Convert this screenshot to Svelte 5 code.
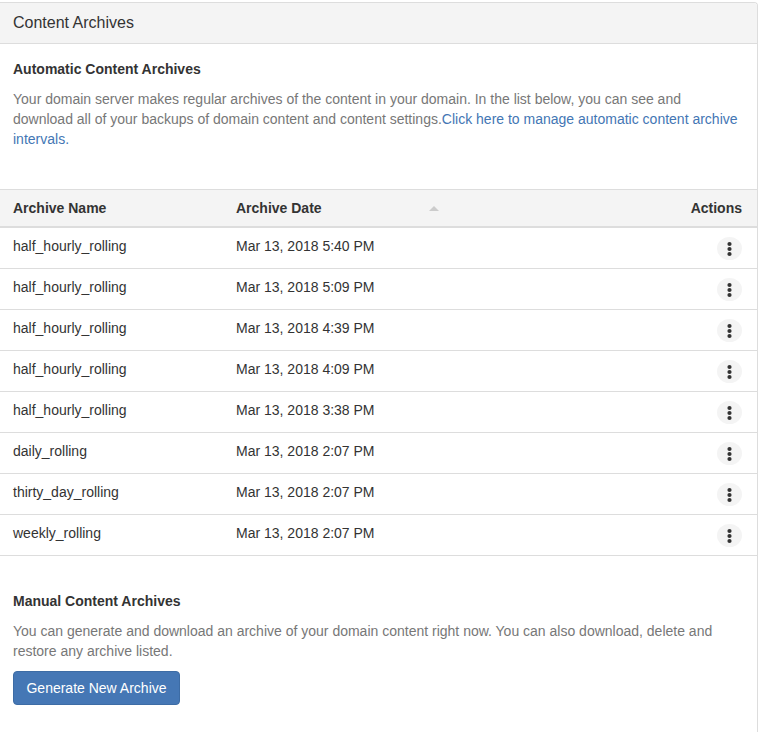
<script>
  const archives = [
    ['half_hourly_rolling', 'Mar 13, 2018 5:40 PM'],
    ['half_hourly_rolling', 'Mar 13, 2018 5:09 PM'],
    ['half_hourly_rolling', 'Mar 13, 2018 4:39 PM'],
    ['half_hourly_rolling', 'Mar 13, 2018 4:09 PM'],
    ['half_hourly_rolling', 'Mar 13, 2018 3:38 PM'],
    ['daily_rolling', 'Mar 13, 2018 2:07 PM'],
    ['thirty_day_rolling', 'Mar 13, 2018 2:07 PM'],
    ['weekly_rolling', 'Mar 13, 2018 2:07 PM']
  ];
</script>

<div class="panel">
  <header>Content Archives</header>
  <section class="intro">
    <h2>Automatic Content Archives</h2>
    <p>
      Your domain server makes regular archives of the content in your domain. In the list below, you can see and<br />
      download all of your backups of domain content and content settings.<a href="#intervals">Click here to manage automatic content archive<br />intervals.</a>
    </p>
  </section>
  <div class="table">
    <div class="row head">
      <span class="name">Archive Name</span>
      <span class="date">Archive Date
        <svg width="10" height="5" viewBox="0 0 10 5"><path d="M0 5 5 0l5 5z" fill="#ccc" /></svg>
      </span>
      <span class="actions">Actions</span>
    </div>
    {#each archives as [name, date]}
      <div class="row">
        <span class="name">{name}</span>
        <span class="date">{date}</span>
        <button class="menu" aria-label="Archive actions">
          <svg width="25" height="23" viewBox="0 0 25 23" fill="#333">
            <circle cx="12.5" cy="7" r="2.1" />
            <circle cx="12.5" cy="12" r="2.1" />
            <circle cx="12.5" cy="17" r="2.1" />
          </svg>
        </button>
      </div>
    {/each}
  </div>
  <section class="manual">
    <h2>Manual Content Archives</h2>
    <p>
      You can generate and download an archive of your domain content right now. You can also download, delete and<br />
      restore any archive listed.
    </p>
    <button class="generate">Generate New Archive</button>
  </section>
</div>

<style>
  :global(body) {
    background: #fff;
    overflow: hidden;
  }
  .panel {
    box-sizing: border-box;
    width: 758px;
    height: 730px;
    margin-top: 2px;
    border: 1px solid #ddd;
    border-width: 1px 1px 0 0;
    border-top-right-radius: 4px;
    overflow: hidden;
    font: 14px/20px "Liberation Sans", Arial, sans-serif;
    color: #333;
  }
  header {
    height: 40px;
    padding-left: 13px;
    border-bottom: 1px solid #ddd;
    background: #f4f4f4;
    font-size: 16px;
    line-height: 39px;
  }
  .intro {
    height: 130px;
    padding: 15px 13px 0;
  }
  h2 {
    margin: 0 0 10px;
    font-size: 14px;
    line-height: 20px;
  }
  p {
    margin: 0;
    color: #777;
    white-space: nowrap;
  }
  a {
    color: #4376b4;
    text-decoration: none;
  }
  .row {
    box-sizing: border-box;
    display: flex;
    align-items: flex-start;
    height: 41px;
    padding: 8px 15px 0 13px;
    border-bottom: 1px solid #ddd;
  }
  .head {
    height: 39px;
    border-top: 1px solid #ddd;
    border-bottom-width: 2px;
    background: #f4f4f4;
    font-weight: bold;
  }
  .name {
    width: 223px;
  }
  .date {
    display: flex;
    align-items: center;
    justify-content: space-between;
    width: 203px;
  }
  .actions,
  .menu {
    margin-left: auto;
  }
  .menu {
    width: 25px;
    height: 23px;
    margin-top: 1px;
    padding: 0;
    border: 0;
    border-radius: 50%;
    background: #f4f4f4;
  }
  svg {
    display: block;
  }
  .manual {
    padding: 35px 13px 0;
  }
  .generate {
    box-sizing: border-box;
    display: block;
    width: 167px;
    height: 34px;
    margin-top: 10px;
    padding: 0;
    border: 1px solid #3d6ca5;
    border-radius: 4px;
    background: #4577b5;
    color: #fff;
    font: inherit;
  }
</style>
